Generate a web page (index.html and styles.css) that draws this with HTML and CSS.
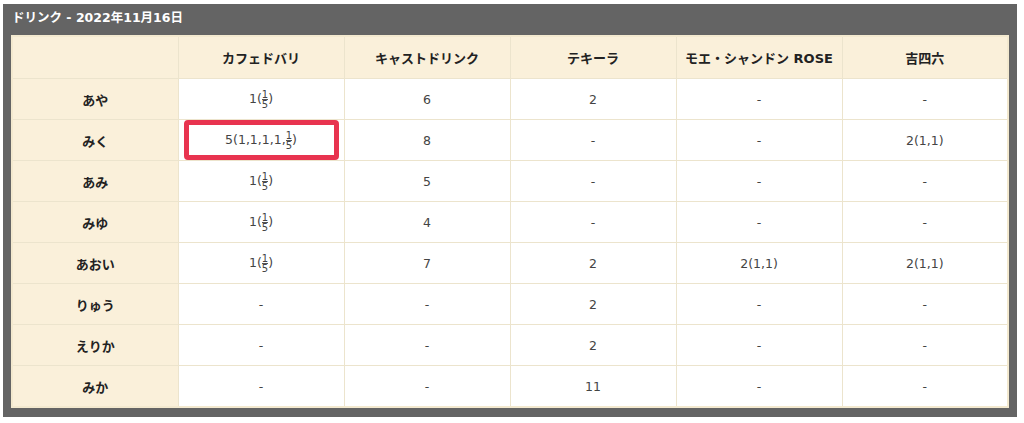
FILE: index.html
```html
<!DOCTYPE html>
<html lang="ja">
<head>
    <meta charset="UTF-8">
    <title>ドリンク</title>
    <link rel="stylesheet" href="styles.css">
</head>
<body>
    <section class="panel">
        <div class="panel-title">ドリンク - 2022年11月16日</div>
        <table class="drinks">
            <tr class="head">
                <th></th>
                <th>カフェドバリ</th>
                <th>キャストドリンク</th>
                <th>テキーラ</th>
                <th>モエ・シャンドン ROSE</th>
                <th>吉四六</th>
            </tr>
            <tr>
                <th>あや</th>
                <td>1(<span class="frac"><span>1</span><span>5</span></span>)</td>
                <td>6</td>
                <td>2</td>
                <td>-</td>
                <td>-</td>
            </tr>
            <tr>
                <th>みく</th>
                <td class="marked">5(1,1,1,1,<span class="frac"><span>1</span><span>5</span></span>)<span class="mark"></span></td>
                <td>8</td>
                <td>-</td>
                <td>-</td>
                <td>2(1,1)</td>
            </tr>
            <tr>
                <th>あみ</th>
                <td>1(<span class="frac"><span>1</span><span>5</span></span>)</td>
                <td>5</td>
                <td>-</td>
                <td>-</td>
                <td>-</td>
            </tr>
            <tr>
                <th>みゆ</th>
                <td>1(<span class="frac"><span>1</span><span>5</span></span>)</td>
                <td>4</td>
                <td>-</td>
                <td>-</td>
                <td>-</td>
            </tr>
            <tr>
                <th>あおい</th>
                <td>1(<span class="frac"><span>1</span><span>5</span></span>)</td>
                <td>7</td>
                <td>2</td>
                <td>2(1,1)</td>
                <td>2(1,1)</td>
            </tr>
            <tr>
                <th>りゅう</th>
                <td>-</td>
                <td>-</td>
                <td>2</td>
                <td>-</td>
                <td>-</td>
            </tr>
            <tr>
                <th>えりか</th>
                <td>-</td>
                <td>-</td>
                <td>2</td>
                <td>-</td>
                <td>-</td>
            </tr>
            <tr>
                <th>みか</th>
                <td>-</td>
                <td>-</td>
                <td>11</td>
                <td>-</td>
                <td>-</td>
            </tr>
        </table>
    </section>
</body>
</html>
```

FILE: styles.css
```css
body {
    margin: 0;
    background: #ffffff;
    font-family: "DejaVu Sans", "Noto Sans CJK JP", sans-serif;
    color: #333333;
}

.panel {
    margin: 4px 0 0 3px;
    width: 1014px;
    height: 413px;
    background: #646464;
    box-sizing: border-box;
    padding: 0 8px 8px 8px;
}

.panel-title {
    height: 31px;
    line-height: 27px;
    padding-left: 1px;
    color: #ffffff;
    font-family: "DejaVu Sans", "Noto Sans CJK JP", sans-serif;
    font-weight: 700;
    font-size: 12.5px;
}

.drinks {
    width: 998px;
    border-collapse: collapse;
    table-layout: fixed;
    background: #ffffff;
    border: 2px solid #f3e9cf;
}

.drinks th,
.drinks td {
    border: 1px solid #ece4cd;
    text-align: center;
    height: 40px;
    padding: 0;
}

.drinks th {
    background: #faf0da;
    font-family: "DejaVu Sans", "Noto Sans CJK JP", sans-serif;
    font-weight: 700;
    font-size: 13px;
    color: #222222;
}

.drinks .head th {
    height: 41px;
}

.drinks td {
    font-size: 12.5px;
    color: #444444;
}

.frac {
    display: inline-flex;
    flex-direction: column;
    vertical-align: middle;
    font-size: 10px;
    line-height: 9px;
}

.frac span:first-child {
    border-bottom: 1px solid #555555;
}

.marked {
    position: relative;
}

.mark {
    position: absolute;
    left: 5px;
    right: 5px;
    top: 0;
    bottom: 0;
    border: 5px solid #e8334f;
    border-radius: 4px;
}
```
